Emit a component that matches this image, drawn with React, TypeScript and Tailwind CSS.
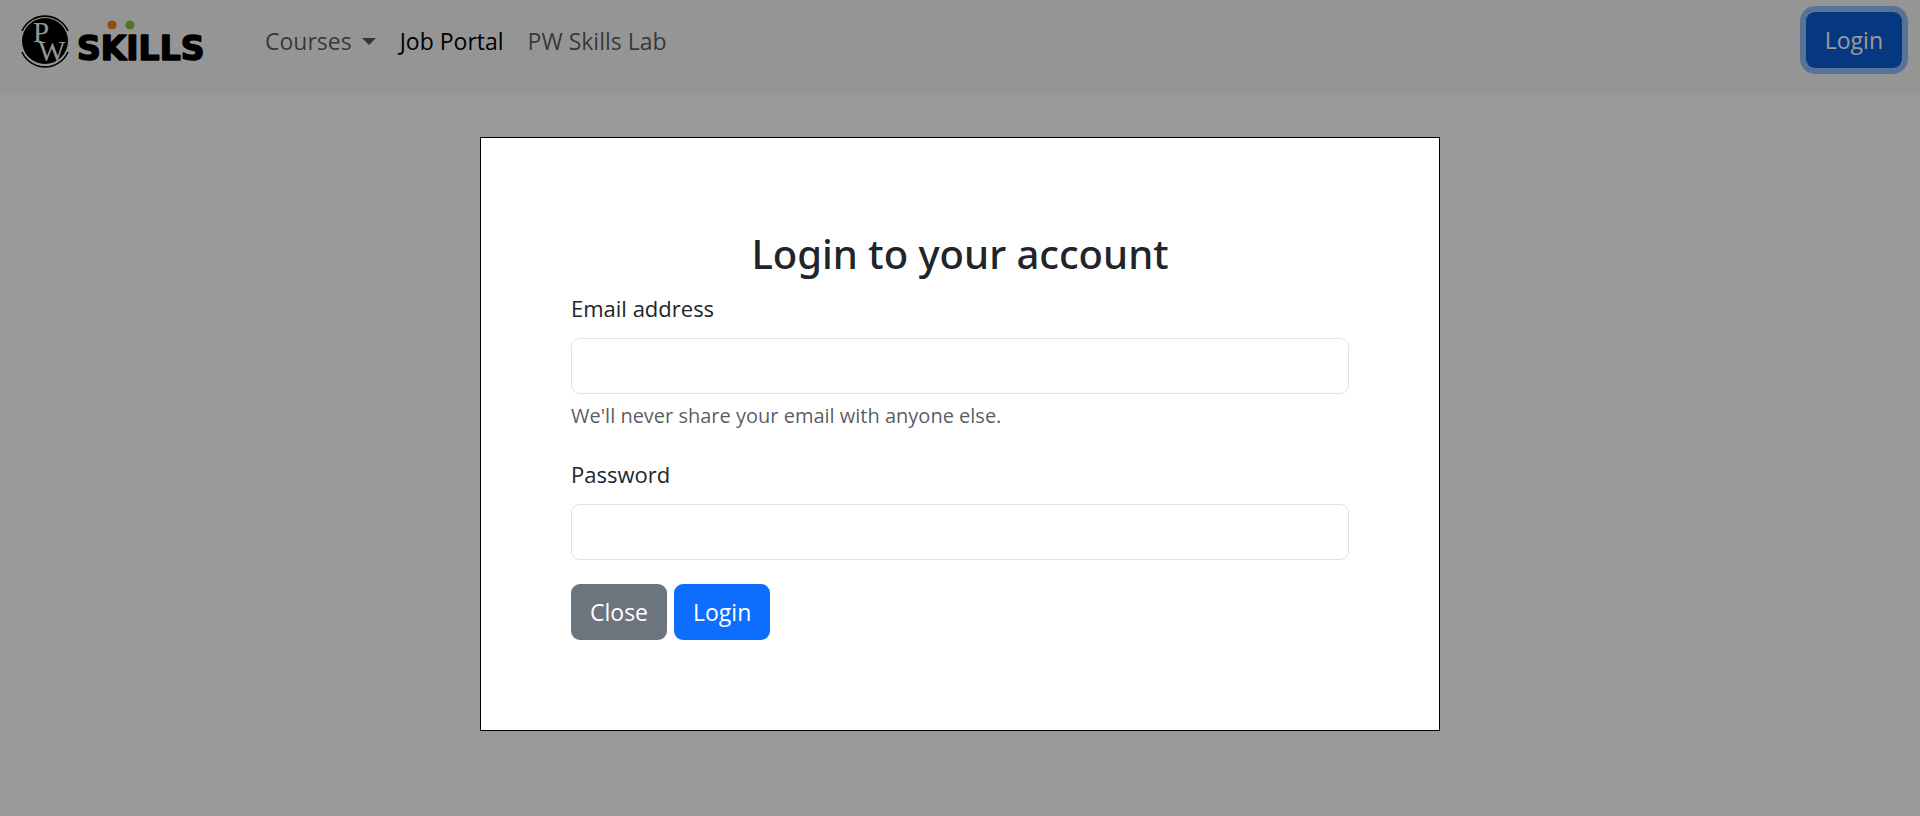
import React, { useState } from "react";

function Logo() {
  return (
    <svg width="204" height="70" viewBox="0 0 204 70" role="img" aria-label="PW Skills" className="block">
      <circle cx="45" cy="41" r="23" fill="#000" />
      <path d="M22 31 A25.2 25.2 0 0 1 68 31" fill="none" stroke="#000" strokeWidth="1.6" />
      <path d="M22 52 A25.2 25.2 0 0 0 68 52" fill="none" stroke="#000" strokeWidth="1.6" />
      <text fill="#f8f9fa" fontFamily="'Liberation Serif', serif" fontSize="29">
        <tspan x="33" y="42">P</tspan>
        <tspan x="38" y="61">W</tspan>
      </text>
      <text
        x="77"
        y="60"
        fontFamily="'DejaVu Sans', sans-serif"
        fontWeight="700"
        fontSize="33"
        fill="#000"
        stroke="#000"
        strokeWidth="1.6"
        strokeLinejoin="round"
      >
        SKILLS
      </text>
      <circle cx="112" cy="25" r="4.6" fill="#fd7e14" />
      <circle cx="130" cy="25" r="4.6" fill="#8bc53f" />
    </svg>
  );
}

function Field({ id, label, type, hint }: { id: string; label: string; type: string; hint?: string }) {
  return (
    <div className="mb-6">
      <label htmlFor={id} className="mb-3 block">
        {label}
      </label>
      <input
        id={id}
        type={type}
        aria-describedby={hint ? id + "-hint" : undefined}
        className="block h-14 w-full rounded-[9px] border border-[#dee2e6] bg-white px-[18px] outline-none"
      />
      {hint && (
        <p id={id + "-hint"} className="mt-1.5 text-[20px] leading-8 text-[#212529]/75">
          {hint}
        </p>
      )}
    </div>
  );
}

export default function App() {
  const [open, setOpen] = useState(true);

  return (
    <div className="min-h-screen bg-white font-['Open_Sans',sans-serif] text-[22px] leading-9 text-[#212529]">
      <header className="flex h-[94px] items-start bg-[#f8f9fa] pr-[18px] text-[23px]">
        <a href="#" className="shrink-0">
          <Logo />
        </a>
        <nav className="ml-[61px] mt-[23px] flex items-center gap-6 text-black/65">
          <button type="button" className="flex items-center gap-2.5">
            Courses
            <svg width="14" height="7" viewBox="0 0 14 7" fill="currentColor" aria-hidden="true">
              <path d="M0 0H14L7 7Z" />
            </svg>
          </button>
          <a href="#" className="text-black">
            Job Portal
          </a>
          <a href="#">PW Skills Lab</a>
        </nav>
        <button
          type="button"
          onClick={() => setOpen(true)}
          className="ml-auto mt-3 h-14 rounded-[9px] bg-[#0b5ed7] px-[19px] text-white shadow-[0_0_0_6px_rgba(49,132,253,0.5)]"
        >
          Login
        </button>
      </header>

      {open && (
        <div className="fixed inset-0 flex items-start justify-center overflow-auto bg-black/40 pt-[137px]">
          <div role="dialog" aria-modal="true" aria-labelledby="login-title" className="w-1/2 border border-black bg-white p-[90px]">
            <h2 id="login-title" className="mb-2.5 text-center font-['Noto_Sans',sans-serif] text-[40px] leading-[52px] font-medium">
              Login to your account
            </h2>
            <form onSubmit={(e) => e.preventDefault()}>
              <Field id="email" label="Email address" type="email" hint="We'll never share your email with anyone else." />
              <Field id="password" label="Password" type="password" />
              <div className="flex gap-[7px] text-[23px]">
                <button type="button" onClick={() => setOpen(false)} className="h-14 rounded-[9px] bg-[#6c757d] px-[19px] text-white">
                  Close
                </button>
                <button type="submit" className="h-14 rounded-[9px] bg-[#0d6efd] px-[19px] text-white">
                  Login
                </button>
              </div>
            </form>
          </div>
        </div>
      )}
    </div>
  );
}
